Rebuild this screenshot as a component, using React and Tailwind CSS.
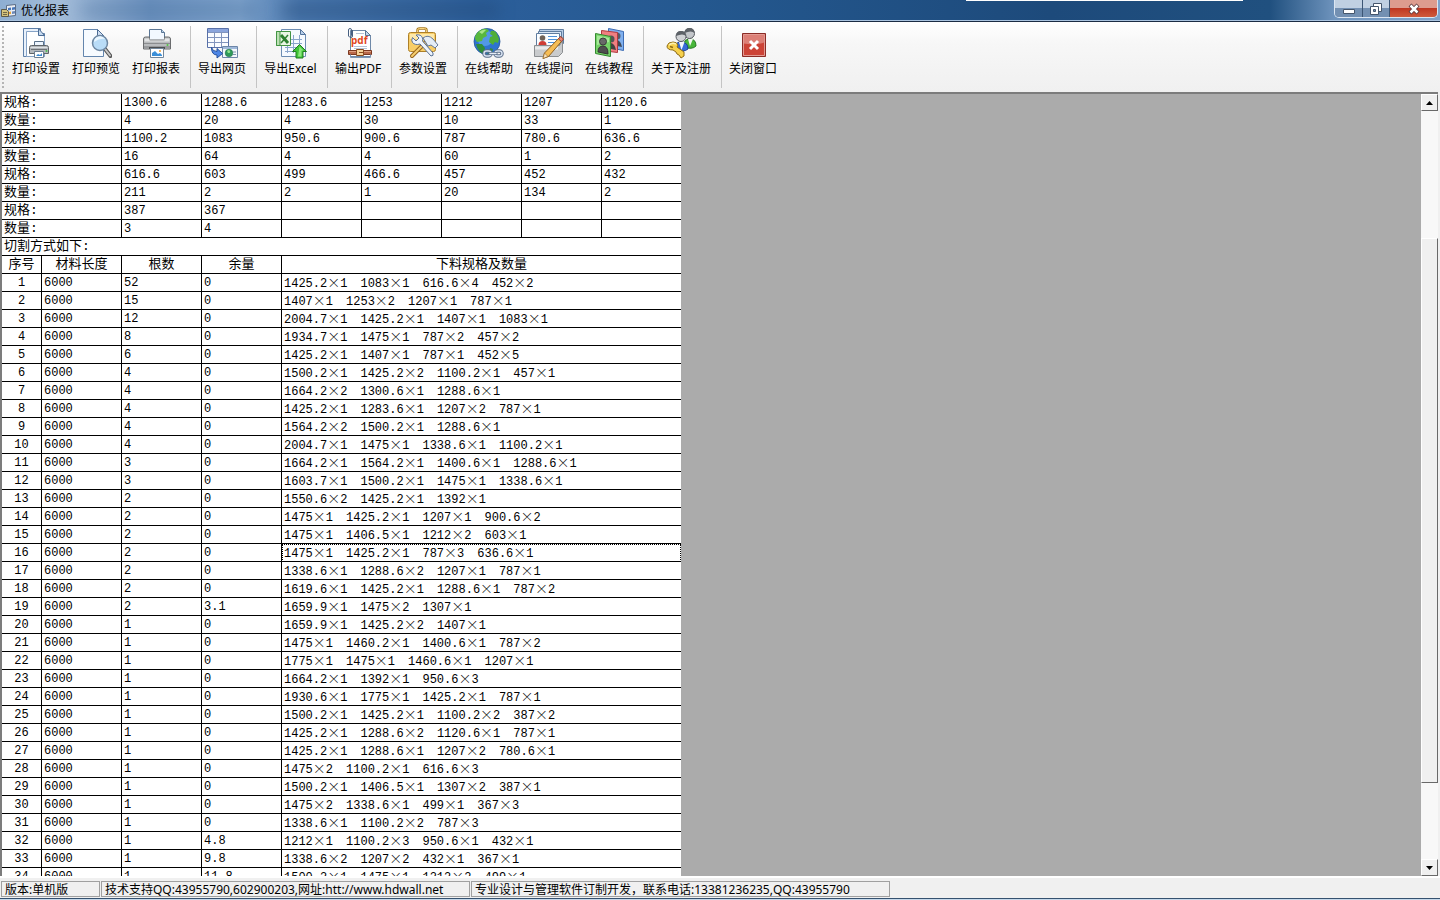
import React, { useState } from 'react'

const specRows = [
  ['规格:', '1300.6', '1288.6', '1283.6', '1253', '1212', '1207', '1120.6'],
  ['数量:', '4', '20', '4', '30', '10', '33', '1'],
  ['规格:', '1100.2', '1083', '950.6', '900.6', '787', '780.6', '636.6'],
  ['数量:', '16', '64', '4', '4', '60', '1', '2'],
  ['规格:', '616.6', '603', '499', '466.6', '457', '452', '432'],
  ['数量:', '211', '2', '2', '1', '20', '134', '2'],
  ['规格:', '387', '367', '', '', '', '', ''],
  ['数量:', '3', '4', '', '', '', '', ''],
]

// count, remainder, cuts
const cutRows = [
  ['52', '0', '1425.2×1 1083×1 616.6×4 452×2'],
  ['15', '0', '1407×1 1253×2 1207×1 787×1'],
  ['12', '0', '2004.7×1 1425.2×1 1407×1 1083×1'],
  ['8', '0', '1934.7×1 1475×1 787×2 457×2'],
  ['6', '0', '1425.2×1 1407×1 787×1 452×5'],
  ['4', '0', '1500.2×1 1425.2×2 1100.2×1 457×1'],
  ['4', '0', '1664.2×2 1300.6×1 1288.6×1'],
  ['4', '0', '1425.2×1 1283.6×1 1207×2 787×1'],
  ['4', '0', '1564.2×2 1500.2×1 1288.6×1'],
  ['4', '0', '2004.7×1 1475×1 1338.6×1 1100.2×1'],
  ['3', '0', '1664.2×1 1564.2×1 1400.6×1 1288.6×1'],
  ['3', '0', '1603.7×1 1500.2×1 1475×1 1338.6×1'],
  ['2', '0', '1550.6×2 1425.2×1 1392×1'],
  ['2', '0', '1475×1 1425.2×1 1207×1 900.6×2'],
  ['2', '0', '1475×1 1406.5×1 1212×2 603×1'],
  ['2', '0', '1475×1 1425.2×1 787×3 636.6×1'],
  ['2', '0', '1338.6×1 1288.6×2 1207×1 787×1'],
  ['2', '0', '1619.6×1 1425.2×1 1288.6×1 787×2'],
  ['2', '3.1', '1659.9×1 1475×2 1307×1'],
  ['1', '0', '1659.9×1 1425.2×2 1407×1'],
  ['1', '0', '1475×1 1460.2×1 1400.6×1 787×2'],
  ['1', '0', '1775×1 1475×1 1460.6×1 1207×1'],
  ['1', '0', '1664.2×1 1392×1 950.6×3'],
  ['1', '0', '1930.6×1 1775×1 1425.2×1 787×1'],
  ['1', '0', '1500.2×1 1425.2×1 1100.2×2 387×2'],
  ['1', '0', '1425.2×1 1288.6×2 1120.6×1 787×1'],
  ['1', '0', '1425.2×1 1288.6×1 1207×2 780.6×1'],
  ['1', '0', '1475×2 1100.2×1 616.6×3'],
  ['1', '0', '1500.2×1 1406.5×1 1307×2 387×1'],
  ['1', '0', '1475×2 1338.6×1 499×1 367×3'],
  ['1', '0', '1338.6×1 1100.2×2 787×3'],
  ['1', '4.8', '1212×1 1100.2×3 950.6×1 432×1'],
  ['1', '9.8', '1338.6×2 1207×2 432×1 367×1'],
  ['1', '11.8', '1500.2×1 1475×1 1212×2 499×1'],
]

/*--------  Icons -------- */
const Svg = ({ children }) => (
  <svg
    viewBox="0 0 32 32"
    className="w-8 h-8 shrink-0"
    fill="none"
    aria-hidden="true"
  >
    {children}
  </svg>
)

const PageSetupIcon = () => (
  <Svg>
    <path d="M3.5 1.5h17v5h4v23h-21z" fill="#e9f1fb" stroke="#5d7fa8" />
    <path d="M6.5 4.5h12l6 5v20h-18z" fill="#fff" stroke="#86a3c6" />
    <path d="M18.500 1.500v7h6z" fill="#c6daf0" stroke="#4c6c94" />
    <path d="M14.500 14.500h9v6h-9z" fill="#eef6ff" stroke="#5a7088" />
    <path d="M9.500 20.500q0-2 2-2h15q2 0 2 2v6h-19z" fill="#b4b8bc" stroke="#5f6468" />
    <path d="M11 22.500h16" stroke="#6e7276" />
    <path d="M10.500 20.500h17" stroke="#dfe2e4" />
    <path d="M14.500 24.500h9v6h-9z" fill="#fff" stroke="#6d7f92" />
    <path d="M16 29l2-2 2 1 2-2v3z" fill="#3c8ad0" />
    <circle cx="26.500" cy="24" r="1" fill="#4ac04a" />
  </Svg>
)

const PreviewIcon = () => (
  <Svg>
    <path d="M3.500 2.500h14l6 6v21h-20z" fill="#f7fbff" stroke="#6385ad" />
    <path d="M17.500 2.500v6h6z" fill="#cfdff2" stroke="#4c6c94" />
    <path d="M25 22l5.500 7" stroke="#555" strokeWidth="4" strokeLinecap="round" />
    <path d="M25 22l5 6.500" stroke="#c8c8c8" strokeWidth="2" strokeLinecap="round" />
    <circle cx="20" cy="16" r="7.500" fill="#b9dcf7" stroke="#6d87a2" strokeWidth="1.500" />
    <path d="M14 15a6 6 0 0 1 11-3q-5-1-11 3z" fill="#e9f6ff" />
  </Svg>
)

const PrinterIcon = () => (
  <Svg>
    <path d="M9.500 2.500h12l3 3v8h-15z" fill="#f2f8ff" stroke="#5b7694" />
    <path d="M21.500 2.500v3h3" fill="#bcd3ec" stroke="#5b7694" />
    <path d="M3.500 12q0-2 2-2h4v3h15v-3h4q2 0 2 2v10h-27z" fill="#b9bbbd" stroke="#6a6c6e" />
    <path d="M4.500 11.500h5v2h15v-2h5v3h-25z" fill="#e2e3e4" />
    <path d="M4 16.500h26" stroke="#8b8d8f" />
    <path d="M4 19h26v3h-26z" fill="#999b9d" />
    <path d="M9 20h16v2h-16z" fill="#4c4e50" />
    <circle cx="27.500" cy="18" r="1" fill="#50c840" />
    <path d="M10.500 21.500h13v9h-13z" fill="#fff" stroke="#73879b" />
    <path d="M12 29v-3l3-2 3 3 2-1 2 2v1z" fill="#3b8fd8" />
    <circle cx="20" cy="24" r="1" fill="#f0a030" />
  </Svg>
)

const ExportWebIcon = () => (
  <Svg>
    <path d="M1.500 1.500h21v19h-21z" fill="#fafcff" stroke="#5870a8" />
    <path d="M2 2h20v3.500h-20z" fill="#8ba5dc" />
    <path d="M2 5.500h20M2 10.500h20M2 15.500h20M8.500 5v15M15.500 5v15" stroke="#8295bd" />
    <path d="M16.500 19.500h15v11h-15z" fill="#f4f8fc" stroke="#6d86a8" />
    <path d="M17 20h14v2h-14z" fill="#9fb9da" />
    <path d="M27 25h3M27 27.500h3" stroke="#7f94ae" />
    <circle cx="23" cy="26" r="3.800" fill="#2f9a58" stroke="#1d6f4c" strokeWidth=".6" />
    <path d="M21 24q2-2 3 0t-2 2z" fill="#8fe08a" />
    <path d="M5.500 20.500q1 4 5.500 4v-3l5.500 5-5.500 4.500v-3q-5.500 0-5.500-7.500z" fill="#4d86e6" stroke="#234f9c" />
  </Svg>
)

const ExportExcelIcon = () => (
  <Svg>
    <path d="M6.500 2.500h19l5 5v22h-24z" fill="#f6faff" stroke="#6c8cb2" />
    <path d="M25.500 2.500v5h5z" fill="#b8cfea" stroke="#54749c" />
    <path d="M10 12.500h17M10 16.500h17M10 20.500h17M10 24.500h17M12.500 8v18M18.500 8v18M24.500 8v18" stroke="#8ba6cc" />
    <path d="M1.500 4.500h14v14h-14z" fill="#e9f6e4" stroke="#439443" />
    <path d="M1.500 4.500h3.500v14h-3.500z" fill="#bce0b4" stroke="#439443" />
    <path d="M6 8l7 8" stroke="#2d812f" strokeWidth="3" />
    <path d="M13 8l-7 8" stroke="#2d812f" strokeWidth="1.500" />
    <path d="M24.500 17.500l7 7h-3.500v6.500h-7v-6.500h-3.500z" fill="#3fc636" stroke="#207b20" />
    <path d="M24.500 19.500l4 4h-2v6h-3.500z" fill="#8be67c" />
  </Svg>
)

const PdfIcon = () => (
  <Svg>
    <path d="M8.500 3.500h15l5 5v21h-20z" fill="#fff" stroke="#6f89a8" />
    <path d="M23.500 3.500v5h5z" fill="#c4d7ec" stroke="#5a7696" />
    <path d="M14 6.500h8M12 19.500h13M12 21.500h13" stroke="#b5c4d6" />
    <text x="9" y="17" fontSize="10" fontWeight="700" fontFamily="Noto Sans, sans-serif" fill="#e2471c">
      pdf
    </text>
    <path d="M6.500 9v-6q0-1.500 1.500-1.500t1.500 1.500v5.500q0 1-1 1M10.500 3v6q0 1.500-1.500 1.500t-2.500-1.500" stroke="#475f80" />
    <path d="M6.500 23.500h23v4h-23z" fill="#b9694a" stroke="#7b3820" />
    <path d="M7 24.500h22" stroke="#e0a183" />
    <path d="M14.500 22.500h7v6h-7z" fill="#f7d49c" stroke="#8a4b1e" />
    <path d="M17 25.500h5" stroke="#8a4b1e" />
    <path d="M8.500 27.500v3h20v-3" stroke="#7e97b3" />
  </Svg>
)

const SettingsIcon = () => (
  <Svg>
    <path d="M10.500 6.500v-3q0-2 2-2h5q2 0 2 2v3" stroke="#a87a20" strokeWidth="2.500" />
    <path d="M10.500 6.500v-3q0-2 2-2h5q2 0 2 2v3" stroke="#f9d681" />
    <path d="M3.500 5.500h23q2 0 2 2v15q0 2-2 2h-23q-2 0-2-2v-15q0-2 2-2z" fill="#f8cd66" stroke="#ad8029" />
    <path d="M3 7h24v5h-24z" fill="#fee9a9" />
    <path d="M20 14l-15 15" stroke="#96651e" strokeWidth="4" strokeLinecap="round" />
    <path d="M20 14l-15 15" stroke="#f7cf6f" strokeWidth="2" strokeLinecap="round" />
    <path d="M16 11q5-4 10 1l5 6-3 3-4-3-3 1z" fill="#e5edf6" stroke="#63799a" />
    <path d="M5.500 10.500l3.500 3.500 3-3-3-3q5-1 6.500 3 .5 2 0 3l10.500 12q1 3-2 3l-11-12q-5 1.500-7.500-1.500-1.500-2 0-5z" fill="#edf3fa" stroke="#5b7296" />
  </Svg>
)

const GlobeIcon = () => (
  <Svg>
    <circle cx="14" cy="14.500" r="13" fill="#2e73cf" stroke="#235494" strokeWidth=".8" />
    <circle cx="12" cy="11" r="8" fill="#62a8ef" opacity=".7" />
    <path d="M4 6q5-5 10-4l2 2-3 2 1 3-4 2-1 3-5 1-2-3q0-4 2-6z" fill="#58b83e" />
    <path d="M18 4q4-1 6 3l2 5-1 4-3-1-2 3-4-3 1-5 3-1-3-2z" fill="#4fae37" />
    <path d="M3 17l6 0 3 4-1 6q-6-2-8-10z" fill="#318d38" />
    <path d="M6 5q4-3 7-2l-4 4z" fill="#a7e588" />
    <path d="M17 21q0 5-4 6l6-1 1-4z" fill="#358a39" />
    <g stroke="#5a6d88" strokeWidth="3.500">
      <rect x="11" y="24" width="7" height="5" rx="2.500" />
      <rect x="22" y="24" width="7" height="5" rx="2.500" />
    </g>
    <g stroke="#d6e1f0" strokeWidth="1.500">
      <rect x="11" y="24" width="7" height="5" rx="2.500" />
      <rect x="22" y="24" width="7" height="5" rx="2.500" />
    </g>
    <path d="M17 26.500h6" stroke="#5a6d88" strokeWidth="3" strokeLinecap="round" />
    <path d="M17 26.500h6" stroke="#e4ecf6" strokeWidth="1.500" strokeLinecap="round" />
  </Svg>
)

const AskIcon = () => (
  <Svg>
    <path d="M6.500 2.500h24v14h-24z" fill="#b7cce5" stroke="#5f7c9f" />
    <path d="M5.500 4.500h23v14h-23z" fill="#d7e5f4" stroke="#5f7c9f" />
    <path d="M3.500 6.500h23v14h-23z" fill="#fafdff" stroke="#5f7c9f" />
    <circle cx="9.500" cy="11" r="2.800" fill="#6f6258" />
    <path d="M5.500 18q0-4 4-4t4 4z" fill="#cf3d35" />
    <path d="M15 9.500h9M15 12.500h9M15 15.500h7" stroke="#4d90d8" />
    <path d="M1.500 18.500h25l3-5v12l-4 4h-24z" fill="#c9cbcd" stroke="#8b8e91" />
    <path d="M2 19.500h23v3h-23z" fill="#e9eaeb" />
    <path d="M27.500 9.500l3 2.500-15 17.500-5.500 2 1.500-5.500z" fill="#f6bd55" stroke="#91601c" />
    <path d="M27.500 9.500l3 2.500-2 2.500-3-2.500z" fill="#e88678" stroke="#9c4840" />
    <path d="M11.500 26l3.500 3.500-5 2z" fill="#f7e3bd" stroke="#91601c" strokeWidth=".6" />
  </Svg>
)

const TutorialIcon = () => (
  <Svg>
    <path d="M15.500 1.500l15 3v19l-15-3z" fill="#80b0ee" stroke="#3d6cb4" />
    <circle cx="24" cy="9" r="3.500" fill="#545b68" />
    <path d="M19 18q1-6 5-5t5 7z" fill="#424956" />
    <path d="M8.500 3.500l16 2v20l-16-2z" fill="#f07f80" stroke="#b03a3e" />
    <circle cx="18" cy="12" r="3.500" fill="#545454" />
    <path d="M13 21q1-6 5-5t5 7z" fill="#424242" />
    <path d="M2.500 6.500l15 3v20l-15-3z" fill="#75d268" stroke="#338a2e" />
    <path d="M4 8.500l12 2.500v4l-12 3z" fill="#a5e998" />
    <circle cx="10" cy="14.500" r="3.500" fill="#686868" stroke="#3c3c3c" />
    <path d="M5 25q0-6 5-6t5 8z" fill="#4e4e4e" stroke="#333" />
  </Svg>
)

const RegisterIcon = () => (
  <Svg>
    <path d="M19 20q-1-8 6-8 6 0 6 7-4 4-12 1z" fill="#48b63a" stroke="#267a22" />
    <path d="M23 12l2 7 3-7z" fill="#f2f7f2" />
    <circle cx="24.500" cy="6.500" r="5" fill="#c3c6ca" stroke="#565b61" />
    <path d="M19.500 6q0-5 5-5t5 5q-3-3-10 0z" fill="#5d6268" />
    <path d="M10 23q-1-8 6-8 7 0 7 7-5 4-13 1z" fill="#376bd8" stroke="#1c3f96" />
    <path d="M14 15l2.500 8 3-8z" fill="#f2f5fb" />
    <circle cx="16" cy="9.500" r="5" fill="#d0d2d5" stroke="#565b61" />
    <path d="M11 9q0-5 5-5t5 5q-3-3-10 0z" fill="#5d6268" />
    <path d="M8 15q4 0 5 3l-1 2 7 5v4l-3 2-2-3-2-1-1-2-3-2q-6 0-6-4 1-4 6-4z" fill="#f6d04c" stroke="#8c6a14" />
    <path d="M4 18q3-3 7-1" stroke="#fdf0ad" strokeWidth="1.500" />
    <path d="M5 19.500l3 1" stroke="#8c6a14" strokeWidth="1.500" />
  </Svg>
)

const CloseIcon = () => (
  <Svg>
    <path d="M5.500 6.500h23v23h-23z" fill="#cc4336" stroke="#8a2c26" />
    <path d="M6.500 7.500h21v8q-10 3-21 1z" fill="#dc7f76" />
    <path d="M6.500 7.500h21v21h-21z" stroke="#e39a92" />
    <path d="M13 14l8 8M21 14l-8 8" stroke="#fff" strokeWidth="3" />
  </Svg>
)

// null draws a separator
const tools = [
  { title: '打印设置', icon: <PageSetupIcon />, width: 'w-[60px]' },
  { title: '打印预览', icon: <PreviewIcon />, width: 'w-[60px]' },
  { title: '打印报表', icon: <PrinterIcon />, width: 'w-[60px]' },
  null,
  { title: '导出网页', icon: <ExportWebIcon />, width: 'w-[60px]' },
  null,
  { title: '导出Excel', icon: <ExportExcelIcon />, width: 'w-[65px]' },
  null,
  { title: '输出PDF', icon: <PdfIcon />, width: 'w-[58px]' },
  null,
  { title: '参数设置', icon: <SettingsIcon />, width: 'w-[60px]' },
  null,
  { title: '在线帮助', icon: <GlobeIcon />, width: 'w-[60px]' },
  { title: '在线提问', icon: <AskIcon />, width: 'w-[60px]' },
  { title: '在线教程', icon: <TutorialIcon />, width: 'w-[60px]' },
  null,
  { title: '关于及注册', icon: <RegisterIcon />, width: 'w-[72px]' },
  null,
  { title: '关闭窗口', icon: <CloseIcon />, width: 'w-[60px]' },
]

const TitleBar = () => (
  <header className="relative flex justify-between h-[22px] shrink-0 overflow-hidden border-b border-[#1b2c44] bg-[linear-gradient(90deg,#8eaed2_0px,#a3bcd9_60px,#6d93c0_150px,#7ea3cc_240px,#4b79b0_300px,#2c5f9b_480px,#24588f_700px,#1d4a7b_1050px,#20507f_1270px,#6f94bd_1335px,#7fa3cb_100%)]">
    <div className="absolute inset-x-0 bottom-0 h-px bg-[#a9c3df]"></div>
    {/* shadows behind the glass */}
    <div className="absolute top-1 left-20 w-[180px] h-3 rounded-full bg-[#3f6796]/40 blur-sm"></div>
    <div className="absolute top-1 left-[280px] w-[220px] h-3 rounded-full bg-[#1f4470]/50 blur-sm"></div>
    <div className="absolute top-0 left-[966px] w-[277px] h-px bg-white"></div>
    <div className="relative flex items-center gap-1 pl-px">
      <svg viewBox="0 0 16 16" className="w-4 h-4" fill="none" aria-hidden="true">
        <path d="M5.500 2.500l9-1v11l-9 1z" fill="#e8ecf2" stroke="#5b6c86" />
        <path d="M7 5l3-.5v2.500l-3 .5zM11 4.500l3-.5v2.500l-3 .5z" fill="#4776bb" />
        <path d="M7 9l3-.5v2.500l-3 .5z" fill="#e6a438" />
        <path d="M11 8.500l3-.5v2.500l-3 .5z" fill="#6b88b8" />
        <path d="M.5 6.500h5l2 2v5h-7z" fill="#d3c27c" stroke="#5d5a4a" />
        <path d="M2 9.500h4M2 11.500h4" stroke="#70684a" />
      </svg>
      <h1 className="text-xs text-black">优化报表</h1>
    </div>
    <div className="relative flex h-[18px] mr-0.5 border border-t-0 border-[#dbe6f2] rounded-b-[5px] overflow-hidden">
      <button
        aria-label="Minimize"
        className="w-[28px] flex items-center justify-center border-r border-[#3c5675] bg-linear-to-b from-[#c0d0e2] from-50% to-[#7390b2] to-50%"
      >
        <svg viewBox="0 0 12 12" className="w-3 h-3" aria-hidden="true">
          <path d="M.5 6.500h11v4h-11z" fill="#fff" stroke="#45566c" />
        </svg>
      </button>
      <button
        aria-label="Restore"
        className="w-[27px] flex items-center justify-center border-r border-[#3c5675] bg-linear-to-b from-[#c0d0e2] from-50% to-[#7390b2] to-50%"
      >
        <svg viewBox="0 0 12 12" className="w-3 h-3" aria-hidden="true">
          <path d="M3.500.5h8v8h-8z" fill="#fff" stroke="#45566c" />
          <path d="M.5 3.500h8v8h-8z" fill="#fff" stroke="#45566c" />
          <path d="M3.500 6.500h2v2h-2z" fill="#7390b2" stroke="#45566c" />
        </svg>
      </button>
      <button
        aria-label="Close"
        className="w-[47px] flex items-center justify-center bg-linear-to-b from-[#dd9c8f] from-45% via-[#bf3722] via-50% to-[#cf5a3c]"
      >
        <svg viewBox="0 0 12 12" className="w-3 h-3" aria-hidden="true">
          <path d="M2 2l8 8M10 2l-8 8" stroke="#57353a" strokeWidth="4" />
          <path d="M2.500 2.500l7 7M9.500 2.500l-7 7" stroke="#fff" strokeWidth="2.500" />
        </svg>
      </button>
    </div>
  </header>
)

const Toolbar = () => (
  <nav
    aria-label="工具栏"
    className="flex h-[70px] shrink-0 pl-0.5 bg-linear-to-b from-white via-[#f7f7f7] via-30% to-[#f0f0f0]"
  >
    <div className="w-1 my-1 border-l-2 border-dotted border-[#b4b4b4]"></div>
    {tools.map((tool, i) =>
      tool ? (
        <button
          key={tool.title}
          className={`${tool.width} flex flex-col items-center pt-[5px]`}
        >
          {tool.icon}
          <span className="text-xs leading-5 whitespace-nowrap">
            {tool.title}
          </span>
        </button>
      ) : (
        <div key={i} className="w-1.5 pl-1 my-1">
          <div className="w-px h-full bg-[#c4c4c4]"></div>
        </div>
      ),
    )}
  </nav>
)

const Cuts = ({ value }) => (
  <div className="flex gap-[13px] h-4">
    {value.split(' ').map((cut, i) => {
      const [size, count] = cut.split('×')
      return (
        <span key={i}>
          {size}
          <span className="text-[13px] leading-none font-light font-['Noto_Sans_CJK_SC',sans-serif]">
            ×
          </span>
          {count}
        </span>
      )
    })}
  </div>
)

const cell =
  'h-[18px] p-0 pt-px pl-0.5 border-b border-r border-black last:border-r-0 whitespace-nowrap text-left text-xs leading-4'
const headCell =
  'h-[18px] p-0 pt-px border-b border-r border-black last:border-r-0 font-normal text-center text-[13px] leading-4'

const Report = () => {
  const [selected, setSelected] = useState(15)

  return (
    <div className="w-[679px] shrink-0 bg-white text-black font-['Liberation_Mono','Noto_Sans_CJK_SC',monospace]">
      <table className="w-full table-fixed border-separate border-spacing-0">
        <colgroup>
          <col className="w-[120px]" />
          <col className="w-20" />
          <col className="w-20" />
          <col className="w-20" />
          <col className="w-20" />
          <col className="w-20" />
          <col className="w-20" />
          <col />
        </colgroup>
        <tbody>
          {specRows.map(([label, ...values], i) => (
            <tr key={i}>
              <th
                scope="row"
                className="h-[18px] p-0 pt-px pl-0.5 border-b border-r border-black font-normal text-left text-[13px] leading-4"
              >
                {label}
              </th>
              {values.map((value, j) => (
                <td key={j} className={cell}>
                  {value}
                </td>
              ))}
            </tr>
          ))}
        </tbody>
      </table>

      <table className="w-full table-fixed border-separate border-spacing-0">
        <caption className="h-[18px] pt-px pl-0.5 border-b border-black text-left text-[13px] leading-4">
          切割方式如下:
        </caption>
        <colgroup>
          <col className="w-10" />
          <col className="w-20" />
          <col className="w-20" />
          <col className="w-20" />
          <col />
        </colgroup>
        <thead>
          <tr>
            <th className={headCell}>序号</th>
            <th className={headCell}>材料长度</th>
            <th className={headCell}>根数</th>
            <th className={headCell}>余量</th>
            <th className={headCell}>下料规格及数量</th>
          </tr>
        </thead>
        <tbody>
          {cutRows.map(([count, rest, cuts], i) => (
            <tr key={i}>
              <td className="h-[18px] p-0 pt-px border-b border-r border-black text-center text-xs leading-4">
                {i + 1}
              </td>
              <td className={cell}>6000</td>
              <td className={cell}>{count}</td>
              <td className={cell}>{rest}</td>
              <td
                onClick={() => setSelected(i)}
                className={`${cell} ${
                  selected === i &&
                  'outline-1 outline-dotted outline-black -outline-offset-1'
                }`}
              >
                <Cuts value={cuts} />
              </td>
            </tr>
          ))}
        </tbody>
      </table>
    </div>
  )
}

const arrowButton =
  'h-[17px] shrink-0 flex items-center justify-center bg-[#f0f0f0] border border-t-white border-l-white border-r-[#696969] border-b-[#696969]'

const ScrollBar = () => (
  <div className="w-[17px] shrink-0 flex flex-col bg-[#f8f8f8]">
    <button aria-label="Scroll up" className={arrowButton}>
      <svg viewBox="0 0 7 4" className="w-[7px] h-1" aria-hidden="true">
        <path d="M3.500 0L7 4H0z" fill="#000" />
      </svg>
    </button>
    <div className="grow-[127]"></div>
    <div className="grow-[545] bg-[#f0f0f0] border border-t-white border-l-white border-r-[#696969] border-b-[#696969]"></div>
    <div className="grow-[76]"></div>
    <button aria-label="Scroll down" className={arrowButton}>
      <svg viewBox="0 0 7 4" className="w-[7px] h-1" aria-hidden="true">
        <path d="M0 0h7L3.500 4z" fill="#000" />
      </svg>
    </button>
  </div>
)

const panel =
  'h-4 pl-[3px] border border-[#a0a0a0] leading-4 whitespace-nowrap'

const StatusBar = () => (
  <footer className="shrink-0 flex gap-px h-[22px] pt-[3px] pl-px bg-[#f0f0f0] border-t-2 border-white text-xs">
    <div className={`${panel} w-[99px]`}>版本:单机版</div>
    <div className={`${panel} w-[369px]`}>
      技术支持QQ:43955790,602900203,网址:htt://www.hdwall.net
    </div>
    <div className={`${panel} w-[419px]`}>
      专业设计与管理软件订制开发，联系电话:13381236235,QQ:43955790
    </div>
  </footer>
)

const App = () => (
  <div className="h-screen flex flex-col overflow-hidden bg-[#f0f0f0] text-black font-['Noto_Sans','Noto_Sans_CJK_SC',sans-serif]">
    <TitleBar />
    <Toolbar />
    <main className="flex-1 min-h-0 flex mr-0.5 border-t-2 border-l-2 border-[#7c7c7c] bg-[#ababab]">
      <div className="flex-1 min-w-0 overflow-hidden">
        <Report />
      </div>
      <ScrollBar />
    </main>
    <StatusBar />
    <div className="h-0.5 shrink-0 border-t border-[#35516f] bg-[#c5d8ea]"></div>
  </div>
)

export default App
